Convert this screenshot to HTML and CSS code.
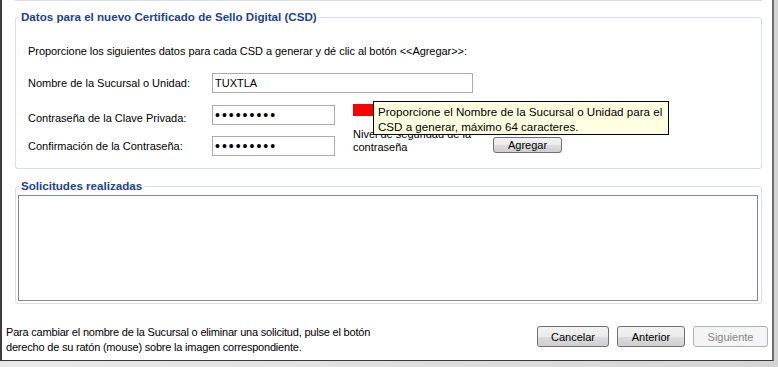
FILE: index.html
```html
<!DOCTYPE html>
<html lang="es">
<head>
  <meta charset="UTF-8" />
  <meta name="viewport" content="width=device-width, initial-scale=1.0"/>
  <title>Certificado de Sello Digital</title>
  <link rel="stylesheet" href="styles.css">
</head>
<body>
  <div class="window">
    <div class="prev-group"></div>

    <fieldset class="group group-datos">
      <legend>Datos para el nuevo Certificado de Sello Digital (CSD)</legend>
      <div class="form">
        <p class="intro">Proporcione los siguientes datos para cada CSD a generar y dé clic al botón &lt;&lt;Agregar&gt;&gt;:</p>

        <div class="row">
          <label for="sucursal">Nombre de la Sucursal o Unidad:</label>
          <input type="text" id="sucursal" class="field field-wide" value="TUXTLA">
        </div>

        <div class="pw-block">
          <div class="pw-fields">
            <div class="row">
              <label class="label-low" for="clave">Contraseña de la Clave Privada:</label>
              <input type="password" id="clave" class="field" value="123456789">
            </div>
            <div class="row">
              <label for="confirma">Confirmación de la Contraseña:</label>
              <input type="password" id="confirma" class="field" value="123456789">
            </div>
          </div>

          <div class="strength">
            <div class="meter"></div>
            <div class="strength-foot">
              <span class="strength-label">Nivel de seguridad de la contraseña</span>
              <button class="btn btn-small">Agregar</button>
            </div>
          </div>

          <div class="tooltip">Proporcione el Nombre de la Sucursal o Unidad para el<br>CSD a generar, máximo 64 caracteres.</div>
        </div>
      </div>
    </fieldset>

    <fieldset class="group group-solicitudes">
      <legend>Solicitudes realizadas</legend>
      <div class="list"></div>
    </fieldset>

    <div class="footer">
      <p class="hint">Para cambiar el nombre de la Sucursal o eliminar una solicitud, pulse el botón<br>derecho de su ratón (mouse) sobre la imagen correspondiente.</p>
      <div class="actions">
        <button class="btn btn-cancel">Cancelar</button>
        <button class="btn btn-back">Anterior</button>
        <button class="btn btn-next" disabled>Siguiente</button>
      </div>
    </div>
  </div>
</body>
</html>
```

FILE: styles.css
```css
* {
  box-sizing: border-box;
}

body {
  margin: 0;
  width: 778px;
  height: 367px;
  overflow: hidden;
  font-family: 'Liberation Sans', Arial, sans-serif;
  font-size: 11px;
  color: #000;
  background: linear-gradient(90deg, #e9e9e9, #d4d4d4);
}

.window {
  display: flex;
  flex-direction: column;
  width: 774px;
  height: 361px;
  background: #fff;
  border-left: 2px solid #3d3d3d;
  border-right: 2px solid #6f6f6f;
  border-bottom: 1px solid #3a3a3a;
}

.prev-group {
  height: 0;
  margin: 0 10px 0 13px;
  border-bottom: 1px solid #d5dfe5;
}

.group {
  margin: 9px 10px 0 13px;
  padding: 0;
  min-width: 0;
  border: 1px solid #d5dfe5;
  border-radius: 3px;
}

.group legend {
  margin-left: 3px;
  padding: 0 2px;
  line-height: 14px;
  font-size: 11.6px;
  font-weight: bold;
  color: #1c3f94;
}

.form {
  padding: 0 12px 12px 12px;
}

.intro {
  margin: 20px 0 15px 0;
  line-height: 14px;
  letter-spacing: -0.05px;
}

.row {
  display: grid;
  grid-template-columns: 184px auto;
  align-items: center;
}

.label-low {
  padding-top: 6px;
}

.field {
  width: 123px;
  height: 20px;
  margin: 0;
  padding: 0 2px;
  font-family: inherit;
  font-size: 11px;
  border: 1px solid #a9adb3;
  background: #fff;
  outline: none;
}

.field-wide {
  width: 261px;
}

.field[type="password"] {
  font-size: 14px;
  letter-spacing: 2px;
}

.pw-block {
  position: relative;
  display: flex;
  margin-top: 12px;
}

.pw-fields {
  display: flex;
  flex-direction: column;
  gap: 11px;
  width: 325px;
}

.strength {
  margin-top: -1px;
}

.meter {
  width: 20px;
  height: 12px;
  background: #f00;
}

.strength-foot {
  display: flex;
  align-items: flex-start;
  margin-top: 12px;
}

.strength-label {
  width: 140px;
  line-height: 13px;
}

.btn {
  height: 21px;
  margin: 0;
  padding: 0;
  font-family: inherit;
  font-size: 11px;
  color: #000;
  border: 1px solid #707070;
  border-radius: 3px;
  background: linear-gradient(#f2f2f2 0%, #ebebeb 50%, #dddddd 50%, #cfcfcf 100%);
}

.btn:disabled {
  color: #838383;
  border-color: #adb2b5;
  background: #f4f4f4;
}

.btn-small {
  width: 69px;
  height: 16px;
  margin-top: 9px;
}

.tooltip {
  position: absolute;
  left: 345px;
  top: -4px;
  z-index: 2;
  width: 296px;
  height: 34px;
  padding: 2px 4px;
  font-size: 11.6px;
  line-height: 15px;
  white-space: nowrap;
  background: #ffffe1;
  border: 1px solid #000;
}

.group-solicitudes {
  margin-top: 10px;
}

.list {
  height: 106px;
  margin: 2px 3px 2px 2px;
  border: 1px solid #828790;
  background: #fff;
}

.footer {
  display: flex;
  justify-content: space-between;
  align-items: flex-start;
  margin-top: 21px;
  padding: 0 4px;
}

.hint {
  margin: 0;
  line-height: 15px;
  letter-spacing: -0.2px;
}

.actions {
  display: flex;
  gap: 8px;
  margin-top: 1px;
}

.btn-cancel {
  width: 72px;
}

.btn-back {
  width: 68px;
}

.btn-next {
  width: 75px;
}
```
